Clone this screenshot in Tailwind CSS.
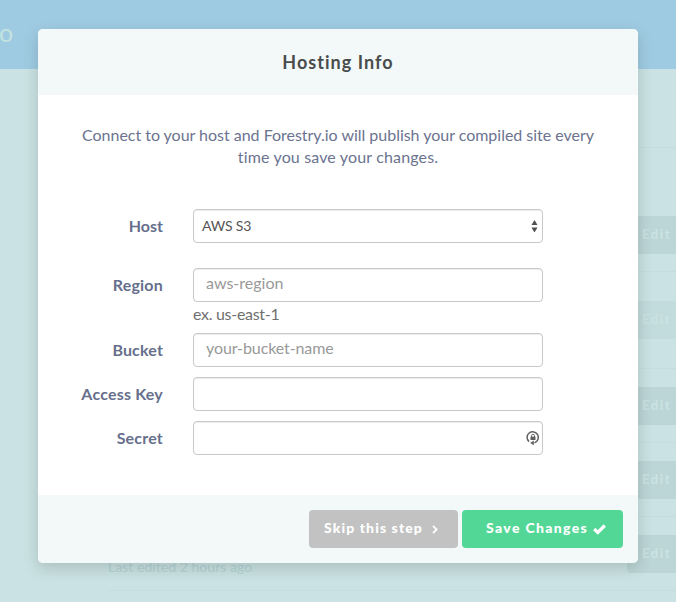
<!DOCTYPE html>
<html lang="en">
<head>
<meta charset="utf-8">
<title>Hosting Info</title>
<script src="https://cdn.jsdelivr.net/npm/@tailwindcss/browser@4"></script>
</head>
<body class="relative h-[602px] w-[676px] overflow-hidden bg-[#cae2e3] font-['Lato','Open_Sans',sans-serif] [font-variant-ligatures:none]">
  <!-- Dimmed page behind the dialog -->
  <div class="flex h-full w-full flex-col">
    <header class="flex h-[69px] shrink-0 items-center bg-[#9fcbe2] pb-1"><span class="-ml-px text-[25px] leading-none text-[#c3e2e0]">o</span></header>
    <main class="flex flex-col pl-[108px] text-[13px] font-black tracking-[1.6px] text-[#cae2e3]">
      <div class="h-[79px] border-b border-[#c4dddd]"></div>
      <div class="flex h-[124px] justify-end border-b border-[#c4dddd] pt-[68px]"><div class="flex h-[38px] w-[49px] items-center bg-[#bcd5d6] pl-[15px]">Edit</div></div>
      <div class="flex h-[97px] justify-end border-b border-[#c4dddd] pt-[29px]"><div class="flex h-[38px] w-[49px] items-center bg-[#c2dbdc] pl-[15px]">Edit</div></div>
      <div class="flex h-[74px] justify-end border-b border-[#c4dddd] pt-[18px]"><div class="flex h-[38px] w-[49px] items-center bg-[#bcd5d6] pl-[15px]">Edit</div></div>
      <div class="flex h-[74px] justify-end border-b border-[#c4dddd] pt-[18px]"><div class="flex h-[38px] w-[49px] items-center bg-[#bcd5d6] pl-[15px]">Edit</div></div>
      <div class="flex h-[74px] justify-between border-b border-[#c4dddd] pt-[18px]">
        <span class="pt-[22px] text-[14px] font-normal leading-5 tracking-[0.04px] text-[#b3d3d3]">Last edited 2 hours ago</span>
        <div class="flex h-[38px] w-[49px] items-center rounded-l bg-[#bcd5d6] pl-[15px]">Edit</div>
      </div>
    </main>
  </div>

  <!-- Dialog -->
  <div class="absolute left-[38px] top-[29px] flex h-[534px] w-[600px] flex-col overflow-hidden rounded-[5px] bg-white shadow-[0_5px_15px_rgba(0,0,0,0.16)]">
    <div class="flex h-[66px] shrink-0 items-center justify-center bg-[#f3f9f9] text-[18px] font-bold text-[#4a4c4c]"><h1 class="tracking-[1.05px]">Hosting Info</h1></div>
    <div class="flex grow flex-col">
      <p class="mt-[29px] text-center text-[16px] leading-[22px] text-[#6b7390]"><span class="tracking-[-0.02px]">Connect to your host and Forestry.io will publish your compiled site every</span><br><span class="tracking-[0.15px]">time you save your changes.</span></p>
      <form class="mt-[41px] flex flex-col text-[16px] text-[#666f8c]">
        <div class="flex h-[34px] items-center gap-[30px]">
          <label class="w-[125px] pb-px text-right font-bold">Host</label>
          <div class="flex h-[34px] w-[350px] items-center justify-between rounded border border-[#c8c8c8] pl-2 pr-1 text-[14px] text-[#555] shadow-[inset_0_1px_1px_rgba(0,0,0,0.075)]">
            <span class="pb-0.5 tracking-[-0.15px]">AWS S3</span>
            <svg class="h-3 w-[7px]" viewBox="0 0 7 12" fill="#505050"><path d="M3.5 0 6.5 5H.5zM3.5 12.5 6.5 7.5H.5z"/></svg>
          </div>
        </div>
        <div class="mt-[25px] flex h-[34px] items-center gap-[30px]">
          <label class="w-[125px] pb-px text-right font-bold tracking-[0.2px]">Region</label>
          <div class="flex h-[34px] w-[350px] items-center rounded border border-[#c8c8c8] px-3 pb-1 text-[#999] shadow-[inset_0_1px_1px_rgba(0,0,0,0.075)]"><span>aws-region</span></div>
        </div>
        <div class="h-[31px] pl-[155px] pt-px leading-[22px] text-[#707070]"><span class="tracking-[-0.3px]">ex. us-east-1</span></div>
        <div class="flex h-[34px] items-center gap-[30px]">
          <label class="w-[125px] pb-px text-right font-bold tracking-[0.15px]">Bucket</label>
          <div class="flex h-[34px] w-[350px] items-center rounded border border-[#c8c8c8] px-3 pb-1 text-[#999] shadow-[inset_0_1px_1px_rgba(0,0,0,0.075)]"><span class="tracking-[-0.1px]">your-bucket-name</span></div>
        </div>
        <div class="mt-2.5 flex h-[34px] items-center gap-[30px]">
          <label class="w-[125px] pb-px text-right font-bold tracking-[0.2px]">Access Key</label>
          <div class="h-[34px] w-[350px] rounded border border-[#c8c8c8] shadow-[inset_0_1px_1px_rgba(0,0,0,0.075)]"></div>
        </div>
        <div class="mt-2.5 flex h-[34px] items-center gap-[30px]">
          <label class="w-[125px] pb-px text-right font-bold tracking-[0.2px]">Secret</label>
          <div class="flex h-[34px] w-[350px] items-center justify-end rounded border border-[#c8c8c8] pr-0.5 shadow-[inset_0_1px_1px_rgba(0,0,0,0.075)]">
            <svg class="h-4 w-[14px]" viewBox="0 0 14 16" fill="none" stroke="#606060"><path d="M3 11.6A5.6 5.6 0 1 1 8.5 12.7" stroke-width="1.5"/><path d="M4.2 12.9 7.8 10.6V15.2z" fill="#606060" stroke="none"/><rect x="4.5" y="6.6" width="5" height="3.4" fill="#606060" stroke="none"/><path d="M5.5 7V5.8a1.5 1.5 0 0 1 3 0V7" stroke-width=".9"/></svg>
          </div>
        </div>
      </form>
    </div>
    <div class="flex h-[68px] shrink-0 items-center justify-end gap-1 bg-[#f3f9f9] pr-[15px] text-[14px] font-black text-white">
      <button class="flex h-[38px] w-[149px] items-center rounded bg-[#c2c2c2] pl-[15px] pb-[3px]"><span class="tracking-[1.1px]">Skip this step</span><svg class="ml-[9px] mt-[3px] h-[9px] w-1.5" viewBox="0 0 6 9" fill="none" stroke="white" stroke-width="1.8"><path d="M1 .8 4.6 4.5 1 8.2"/></svg></button>
      <button class="flex h-[38px] w-[161px] items-center rounded bg-[#53d796] pl-6 pb-[3px]"><span class="tracking-[1.35px]">Save Changes</span><svg class="ml-[5px] mt-[3px] h-[11px] w-[13px]" viewBox="0 0 13 11" fill="none" stroke="white" stroke-width="3.2"><path d="M1.2 5 4.8 8.5 11.8 1.5"/></svg></button>
    </div>
  </div>
</body>
</html>
